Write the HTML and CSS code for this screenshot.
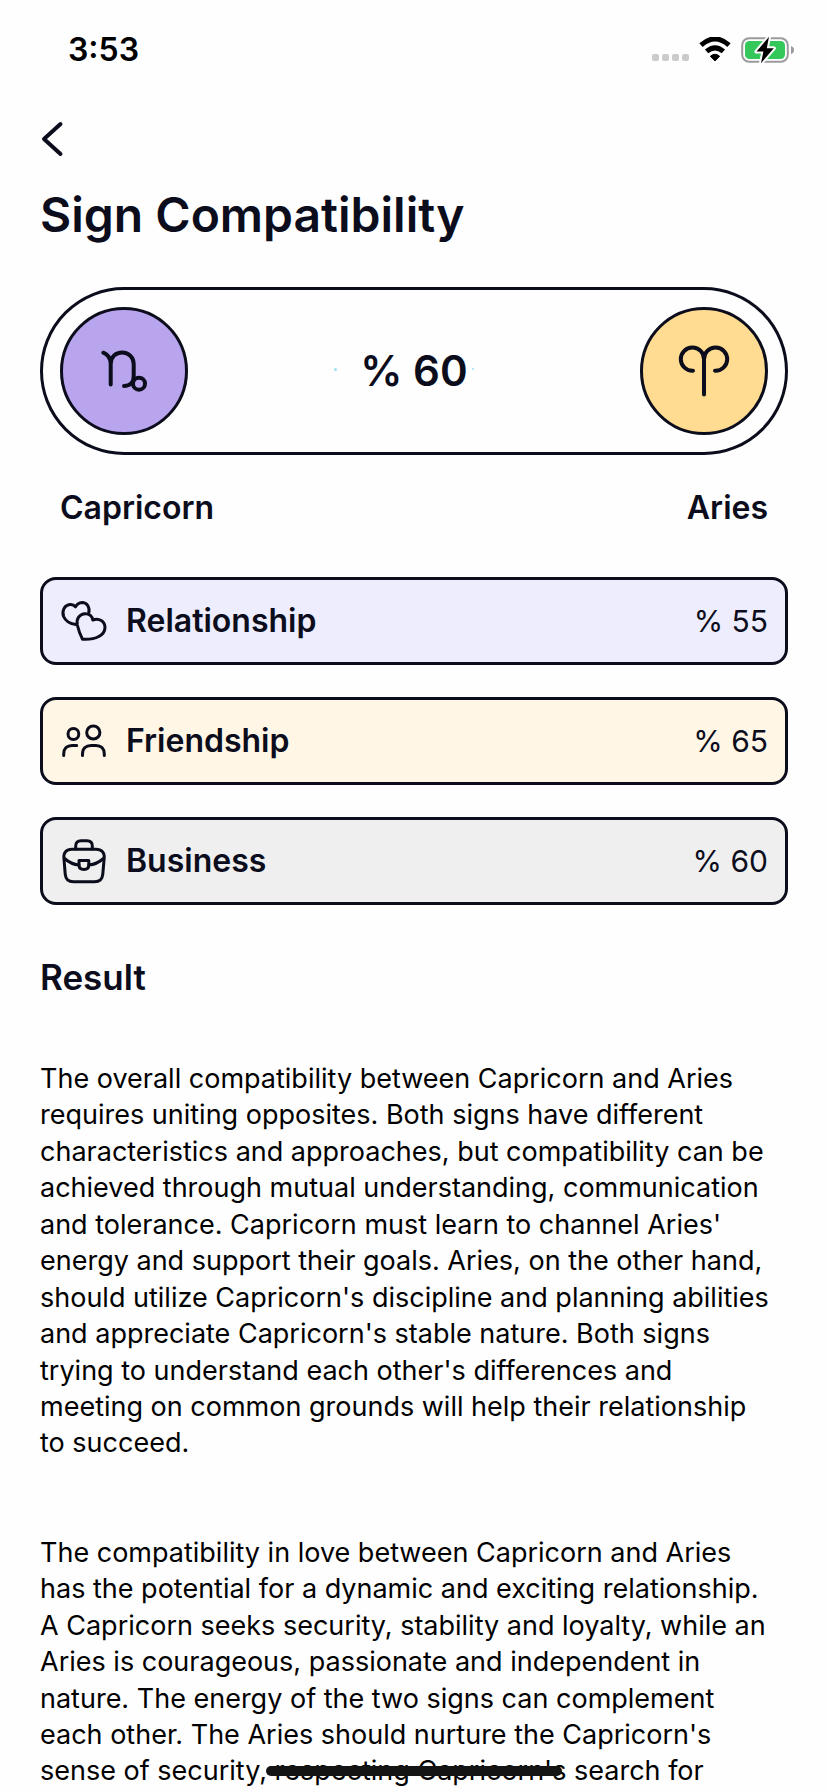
FILE: index.html
```html
<!DOCTYPE html>
<html lang="en">
<head>
<meta charset="utf-8">
<meta name="viewport" content="width=device-width, initial-scale=1">
<title>Sign Compatibility</title>
<link rel="stylesheet" href="styles.css">
</head>
<body>
<div class="status-bar">
  <span class="time">3:53</span>
  <div class="status-icons">
    <svg class="signal" viewBox="0 0 38 26" aria-hidden="true">
      <rect x="1" y="17" width="7" height="7" rx="2"/><rect x="11" y="17" width="7" height="7" rx="2"/><rect x="21" y="17" width="7" height="7" rx="2"/><rect x="31" y="17" width="7" height="7" rx="2"/>
    </svg>
    <svg class="wifi" viewBox="0 0 32 26" aria-hidden="true">
      <path d="M2 8.2Q16-4.4 30 8.2" stroke-width="5"/>
      <path d="M7.6 14.4Q16 7.2 24.4 14.4" stroke-width="5"/>
      <path class="solid" d="M11.4 19.2Q16 15.4 20.6 19.2L16 24Z"/>
    </svg>
    <svg class="battery" viewBox="0 0 54 28" aria-hidden="true">
      <rect class="shell" x="1.2" y="2.2" width="45.6" height="23.6" rx="7"/>
      <rect class="charge" x="4" y="5" width="40" height="18" rx="4.5"/>
      <path class="nub" d="M50 10Q53 11 53 14T50 18Z"/>
      <path class="bolt" d="M28 .8L15.5 15.6H22.4L20 27.2L32.8 12.2H25.8Z"/>
    </svg>
  </div>
</div>
<main class="screen">
  <button class="back" type="button" aria-label="Back">
    <svg viewBox="0 0 24 40" aria-hidden="true"><path d="M20.500 5L4 20L20.500 35"/></svg>
  </button>
  <h1 class="title">Sign Compatibility</h1>

  <section class="match">
    <div class="match-pill">
      <div class="sign sign-capricorn">
        <svg class="glyph" viewBox="0 0 54 54" aria-hidden="true">
          <path d="M6.300 8.700C10.500 10.500 13.700 14 13.700 20V40.500M13.700 20C13.700 13 18.500 8.500 25.200 8.500S36.700 13.500 36.700 20V32C36.700 38.500 33 42 27 42"/>
          <circle cx="42" cy="39.700" r="6"/>
        </svg>
      </div>
      <strong class="score">% 60</strong>
      <div class="sign sign-aries">
        <svg class="glyph" viewBox="0 0 54 54" aria-hidden="true">
          <path d="M16 26.700A11.600 11.600 0 1 1 27 15.300V50.500M38 26.700A11.600 11.600 0 1 0 27 15.300"/>
        </svg>
      </div>
    </div>
    <div class="match-names"><span>Capricorn</span><span>Aries</span></div>
  </section>

  <ul class="areas">
    <li class="area area-relationship">
      <svg class="icon" viewBox="0 0 48 48" aria-hidden="true">
        <path d="M16 27.600C10 26.800 5.500 24 3.600 19.500C1.500 14 4.500 8 10 7.600C12.500 7.400 14.300 8.300 15.500 9.900C17 7 19 5.500 22 5.400C27 5.400 30 10 28.800 16"/>
        <path d="M22.500 42.200C20.500 38.500 18.500 33 17.300 28C16 22 19.500 17 25 16.700C29.500 16.600 32.200 19.500 32.800 23C39 20.500 45 24.500 45 30.800C44.500 38 36.500 43 22.500 42.200Z"/>
      </svg>
      <span class="area-name">Relationship</span>
      <span class="area-value">% 55</span>
    </li>
    <li class="area area-friendship">
      <svg class="icon" viewBox="0 0 48 48" aria-hidden="true">
        <circle cx="13.400" cy="17" r="5.400"/>
        <circle cx="33.300" cy="15.500" r="6.600"/>
        <path d="M3.700 38.500V37C3.700 31.500 7 28.500 12 28.500H16.700"/>
        <path d="M22.500 38.500V37C22.500 31.500 26 28.500 31 28.500H36C41 28.500 44.300 31.500 44.300 37V38.500"/>
      </svg>
      <span class="area-name">Friendship</span>
      <span class="area-value">% 65</span>
    </li>
    <li class="area area-business">
      <svg class="icon" viewBox="0 0 48 48" aria-hidden="true">
        <path d="M15.700 12V9C15.700 5.500 17.500 3.800 21 3.800H27C30.500 3.800 32.300 5.500 32.300 9V12"/>
        <path d="M12 12.300H36C41.500 12.300 44.600 15.500 44.200 21L42.800 37C42.300 42.500 40 44.700 34.500 44.700H13.500C8 44.700 5.700 42.500 5.200 37L3.900 21C3.500 15.500 6.500 12.300 12 12.300Z"/>
        <path d="M4.500 21.500C8.500 25 13.500 27.500 19 28M43.500 21.500C39.500 25 34.500 27.500 28.800 28"/>
        <path d="M19 23.500H28.800V28C28.800 31 27 32.400 23.900 32.400S19 31 19 28Z"/>
      </svg>
      <span class="area-name">Business</span>
      <span class="area-value">% 60</span>
    </li>
  </ul>

  <h2 class="result-title">Result</h2>
  <article class="result">
    <p>The overall compatibility between Capricorn and Aries<br>
      requires uniting opposites. Both signs have different<br>
      characteristics and approaches, but compatibility can be<br>
      achieved through mutual understanding, communication<br>
      and tolerance. Capricorn must learn to channel Aries'<br>
      energy and support their goals. Aries, on the other hand,<br>
      should utilize Capricorn's discipline and planning abilities<br>
      and appreciate Capricorn's stable nature. Both signs<br>
      trying to understand each other's differences and<br>
      meeting on common grounds will help their relationship<br>
      to succeed.</p>
    <p>The compatibility in love between Capricorn and Aries<br>
      has the potential for a dynamic and exciting relationship.<br>
      A Capricorn seeks security, stability and loyalty, while an<br>
      Aries is courageous, passionate and independent in<br>
      nature. The energy of the two signs can complement<br>
      each other. The Aries should nurture the Capricorn's<br>
      sense of security, respecting Capricorn's search for</p>
  </article>
</main>
<div class="home-indicator"></div>
</body>
</html>
```
FILE: styles.css
```css
* {
  box-sizing: border-box;
}

body {
  margin: 0;
  background: #fefefe;
  color: #0c0d1c;
  font-family: Inter, "Open Sans", sans-serif;
}

svg {
  display: block;
  fill: none;
  stroke-linecap: round;
  stroke-linejoin: round;
}

.status-bar {
  display: flex;
  align-items: center;
  justify-content: space-between;
  height: 100px;
  padding: 0 33px 0 68px;
  color: #000;
}

.time {
  font-size: 32px;
  font-weight: 600;
  line-height: 40px;
}

.status-icons {
  display: flex;
  align-items: center;
  gap: 10px;
}

.signal {
  width: 38px;
  height: 26px;
  fill: #cbcbcb;
}

.wifi {
  width: 32px;
  height: 26px;
  stroke: #000;
  stroke-linecap: butt;
}

.wifi .solid {
  fill: #000;
}

.battery {
  width: 54px;
  height: 28px;
}

.shell {
  stroke: #9b9b9f;
  stroke-width: 2;
}

.charge {
  fill: #34c759;
}

.nub {
  fill: #9b9b9f;
}

.bolt {
  fill: #000;
  stroke: #fff;
  stroke-width: 4;
  paint-order: stroke;
}

.screen {
  padding: 19px 40px 0;
}

.back {
  display: block;
  padding: 0;
  border: 0;
  background: none;
}

.back svg {
  width: 24px;
  height: 40px;
  stroke: #0c0d1c;
  stroke-width: 4;
}

.title {
  margin: 26px 0 0;
  font-size: 48px;
  font-weight: 600;
  line-height: 60px;
}

.match {
  margin-top: 42px;
}

.match-pill {
  display: flex;
  align-items: center;
  justify-content: space-between;
  padding: 17px;
  border: 3px solid #0c0d1c;
  border-radius: 84px;
}

.sign {
  display: flex;
  align-items: center;
  justify-content: center;
  width: 128px;
  height: 128px;
  border: 3px solid #0c0d1c;
  border-radius: 50%;
}

.sign-capricorn {
  background: #b9a5ee;
}

.sign-aries {
  background: #ffdc92;
}

.glyph {
  width: 54px;
  height: 54px;
  stroke: #0c0d1c;
  stroke-width: 4;
}

.score {
  position: relative;
  font-size: 42px;
  font-weight: 600;
  line-height: 56px;
}

.score::before,
.score::after {
  content: "";
  position: absolute;
  top: 25px;
  width: 3px;
  height: 3px;
  border-radius: 50%;
  background: #9fe0f0;
}

.score::before {
  left: -26px;
}

.score::after {
  right: -6px;
  width: 2px;
  height: 2px;
}

.match-names {
  display: flex;
  justify-content: space-between;
  padding: 33px 20px 0;
  font-size: 32px;
  font-weight: 600;
  line-height: 40px;
}

.areas {
  display: flex;
  flex-direction: column;
  gap: 32px;
  margin: 49px 0 0;
  padding: 0;
  list-style: none;
}

.area {
  display: flex;
  align-items: center;
  gap: 18px;
  padding: 17px;
  border: 3px solid #0c0d1c;
  border-radius: 16px;
  line-height: 48px;
}

.area-relationship {
  background: #ededfd;
}

.area-friendship {
  background: #fff6e5;
}

.area-business {
  background: #efefef;
}

.icon {
  width: 48px;
  height: 48px;
  stroke: #0c0d1c;
  stroke-width: 3;
}

.area-name {
  flex: 1;
  font-size: 32px;
  font-weight: 600;
}

.area-value {
  font-size: 30px;
}

.result-title {
  margin: 48px 0 0;
  font-size: 35px;
  font-weight: 600;
  line-height: 48px;
}

.result {
  display: flex;
  flex-direction: column;
  gap: 73px;
  margin-top: 60px;
  color: #000;
  font-size: 27px;
  line-height: 1.35;
}

.result p {
  margin: 0;
}

.home-indicator {
  position: fixed;
  bottom: 16px;
  left: 50%;
  width: 296px;
  height: 10px;
  margin-left: -148px;
  border-radius: 5px;
  background: #141414;
}
```
